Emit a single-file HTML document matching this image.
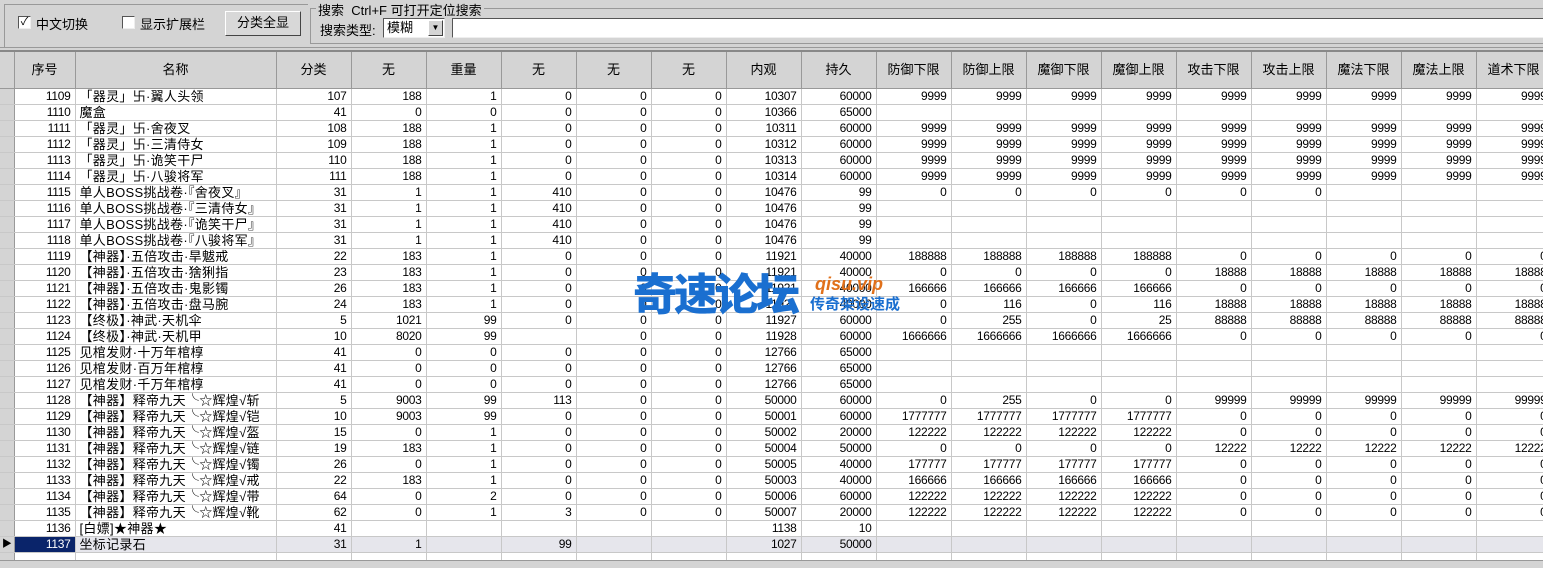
<!DOCTYPE html>
<html><head><meta charset="utf-8">
<style>
*{margin:0;padding:0;box-sizing:border-box}
body{width:1543px;height:568px;overflow:hidden;background:#d4d4d4;font:12px "Liberation Sans","Noto Sans CJK SC",sans-serif;color:#000;position:relative}
.abs{position:absolute}
.cb{position:absolute;width:13px;height:13px;background:#fff;border:1px solid #555;border-right-color:#eee;border-bottom-color:#eee;font-size:11px;line-height:11px;text-align:center}
.btn{position:absolute;left:225px;top:11px;width:76px;height:25px;background:#d8d8d8;border:1px solid;border-color:#fff #444 #444 #fff;text-align:center;line-height:22px;font-size:13px}
#grid{position:absolute;left:0;top:50px;width:1543px;height:510px;background:#fff;border-top:2px solid #888;overflow:hidden}
table{border-collapse:collapse;table-layout:fixed;position:absolute;left:0;top:0;width:1551px}
td,th{height:16px;line-height:15px;border-right:1px solid #c8c8c8;border-bottom:1px solid #c8c8c8;text-align:right;padding:0 4px 0 0;white-space:nowrap;overflow:hidden;letter-spacing:-0.3px;font-size:12px}
th{height:36px;background:#d4d4d4;font-weight:normal;text-align:center;padding:0;border-right:1px solid #999;border-bottom:1px solid #999;font-size:13px;letter-spacing:0}
td.n{text-align:left;padding-left:4px;letter-spacing:0.3px;font-size:13px}
td.i{background:#d4d4d4;border-right:1px solid #999;padding:0}
tr.sel td{background:#e6e6ec}
tr.sel td.id{background:#0a246a;color:#fff}
tr.sel td.i{background:#d4d4d4;text-align:center;font-size:10px}
</style></head><body>
<div class="abs" style="left:0;top:0;width:1543px;height:48px;border-bottom:1px solid #999"></div>
<div class="abs" style="left:4px;top:4px;width:304px;height:44px;border:1px solid #999;border-right:none"></div>
<div class="cb" style="left:18px;top:16px">✓</div>
<div class="abs" style="left:36px;top:14px;font-size:13px">中文切换</div>
<div class="cb" style="left:122px;top:16px"></div>
<div class="abs" style="left:140px;top:14px;font-size:13px">显示扩展栏</div>
<div class="btn">分类全显</div>
<div class="abs" style="left:310px;top:8px;width:1240px;height:36px;border:1px solid #999;border-right:none"></div>
<div class="abs" style="left:316px;top:0px;background:#d4d4d4;padding:0 2px;font-size:13px">搜索 &nbsp;Ctrl+F 可打开定位搜索</div>
<div class="abs" style="left:320px;top:20px;font-size:13px">搜索类型:</div>
<div class="abs" style="left:383px;top:18px;width:62px;height:20px;background:#fff;border:1px solid #555;border-right-color:#eee;border-bottom-color:#eee;font-size:13px;padding-left:3px;line-height:17px">模糊
<div class="abs" style="right:1px;top:1px;width:15px;height:16px;background:#d4d4d4;border:1px solid;border-color:#fff #444 #444 #fff;font-size:8px;text-align:center;line-height:14px">▼</div></div>
<div class="abs" style="left:452px;top:18px;width:1100px;height:20px;background:#fff;border:1px solid #555;border-right:none;border-bottom-color:#eee"></div>
<div id="grid">
<table>
<colgroup><col style="width:14px"><col style="width:61px"><col style="width:201px"><col style="width:75px"><col style="width:75px"><col style="width:75px"><col style="width:75px"><col style="width:75px"><col style="width:75px"><col style="width:75px"><col style="width:75px"><col style="width:75px"><col style="width:75px"><col style="width:75px"><col style="width:75px"><col style="width:75px"><col style="width:75px"><col style="width:75px"><col style="width:75px"><col style="width:75px"></colgroup>
<tr><th></th><th>序号</th><th>名称</th><th>分类</th><th>无</th><th>重量</th><th>无</th><th>无</th><th>无</th><th>内观</th><th>持久</th><th>防御下限</th><th>防御上限</th><th>魔御下限</th><th>魔御上限</th><th>攻击下限</th><th>攻击上限</th><th>魔法下限</th><th>魔法上限</th><th>道术下限</th></tr>
<tr><td class="i"></td><td>1109</td><td class="n">「器灵」卐·翼人头领</td><td>107</td><td>188</td><td>1</td><td>0</td><td>0</td><td>0</td><td>10307</td><td>60000</td><td>9999</td><td>9999</td><td>9999</td><td>9999</td><td>9999</td><td>9999</td><td>9999</td><td>9999</td><td>9999</td></tr>
<tr><td class="i"></td><td>1110</td><td class="n">魔盒</td><td>41</td><td>0</td><td>0</td><td>0</td><td>0</td><td>0</td><td>10366</td><td>65000</td><td></td><td></td><td></td><td></td><td></td><td></td><td></td><td></td><td></td></tr>
<tr><td class="i"></td><td>1111</td><td class="n">「器灵」卐·舍夜叉</td><td>108</td><td>188</td><td>1</td><td>0</td><td>0</td><td>0</td><td>10311</td><td>60000</td><td>9999</td><td>9999</td><td>9999</td><td>9999</td><td>9999</td><td>9999</td><td>9999</td><td>9999</td><td>9999</td></tr>
<tr><td class="i"></td><td>1112</td><td class="n">「器灵」卐·三清侍女</td><td>109</td><td>188</td><td>1</td><td>0</td><td>0</td><td>0</td><td>10312</td><td>60000</td><td>9999</td><td>9999</td><td>9999</td><td>9999</td><td>9999</td><td>9999</td><td>9999</td><td>9999</td><td>9999</td></tr>
<tr><td class="i"></td><td>1113</td><td class="n">「器灵」卐·诡笑干尸</td><td>110</td><td>188</td><td>1</td><td>0</td><td>0</td><td>0</td><td>10313</td><td>60000</td><td>9999</td><td>9999</td><td>9999</td><td>9999</td><td>9999</td><td>9999</td><td>9999</td><td>9999</td><td>9999</td></tr>
<tr><td class="i"></td><td>1114</td><td class="n">「器灵」卐·八骏将军</td><td>111</td><td>188</td><td>1</td><td>0</td><td>0</td><td>0</td><td>10314</td><td>60000</td><td>9999</td><td>9999</td><td>9999</td><td>9999</td><td>9999</td><td>9999</td><td>9999</td><td>9999</td><td>9999</td></tr>
<tr><td class="i"></td><td>1115</td><td class="n">单人BOSS挑战卷·『舍夜叉』</td><td>31</td><td>1</td><td>1</td><td>410</td><td>0</td><td>0</td><td>10476</td><td>99</td><td>0</td><td>0</td><td>0</td><td>0</td><td>0</td><td>0</td><td></td><td></td><td></td></tr>
<tr><td class="i"></td><td>1116</td><td class="n">单人BOSS挑战卷·『三清侍女』</td><td>31</td><td>1</td><td>1</td><td>410</td><td>0</td><td>0</td><td>10476</td><td>99</td><td></td><td></td><td></td><td></td><td></td><td></td><td></td><td></td><td></td></tr>
<tr><td class="i"></td><td>1117</td><td class="n">单人BOSS挑战卷·『诡笑干尸』</td><td>31</td><td>1</td><td>1</td><td>410</td><td>0</td><td>0</td><td>10476</td><td>99</td><td></td><td></td><td></td><td></td><td></td><td></td><td></td><td></td><td></td></tr>
<tr><td class="i"></td><td>1118</td><td class="n">单人BOSS挑战卷·『八骏将军』</td><td>31</td><td>1</td><td>1</td><td>410</td><td>0</td><td>0</td><td>10476</td><td>99</td><td></td><td></td><td></td><td></td><td></td><td></td><td></td><td></td><td></td></tr>
<tr><td class="i"></td><td>1119</td><td class="n">【神器】·五倍攻击·旱魃戒</td><td>22</td><td>183</td><td>1</td><td>0</td><td>0</td><td>0</td><td>11921</td><td>40000</td><td>188888</td><td>188888</td><td>188888</td><td>188888</td><td>0</td><td>0</td><td>0</td><td>0</td><td>0</td></tr>
<tr><td class="i"></td><td>1120</td><td class="n">【神器】·五倍攻击·猞猁指</td><td>23</td><td>183</td><td>1</td><td>0</td><td>0</td><td>0</td><td>11921</td><td>40000</td><td>0</td><td>0</td><td>0</td><td>0</td><td>18888</td><td>18888</td><td>18888</td><td>18888</td><td>18888</td></tr>
<tr><td class="i"></td><td>1121</td><td class="n">【神器】·五倍攻击·鬼影镯</td><td>26</td><td>183</td><td>1</td><td>0</td><td>0</td><td>0</td><td>11921</td><td>40000</td><td>166666</td><td>166666</td><td>166666</td><td>166666</td><td>0</td><td>0</td><td>0</td><td>0</td><td>0</td></tr>
<tr><td class="i"></td><td>1122</td><td class="n">【神器】·五倍攻击·盘马腕</td><td>24</td><td>183</td><td>1</td><td>0</td><td>0</td><td>0</td><td>11921</td><td>40000</td><td>0</td><td>116</td><td>0</td><td>116</td><td>18888</td><td>18888</td><td>18888</td><td>18888</td><td>18888</td></tr>
<tr><td class="i"></td><td>1123</td><td class="n">【终极】·神武·天机伞</td><td>5</td><td>1021</td><td>99</td><td>0</td><td>0</td><td>0</td><td>11927</td><td>60000</td><td>0</td><td>255</td><td>0</td><td>25</td><td>88888</td><td>88888</td><td>88888</td><td>88888</td><td>88888</td></tr>
<tr><td class="i"></td><td>1124</td><td class="n">【终极】·神武·天机甲</td><td>10</td><td>8020</td><td>99</td><td></td><td>0</td><td>0</td><td>11928</td><td>60000</td><td>1666666</td><td>1666666</td><td>1666666</td><td>1666666</td><td>0</td><td>0</td><td>0</td><td>0</td><td>0</td></tr>
<tr><td class="i"></td><td>1125</td><td class="n">见棺发财·十万年棺椁</td><td>41</td><td>0</td><td>0</td><td>0</td><td>0</td><td>0</td><td>12766</td><td>65000</td><td></td><td></td><td></td><td></td><td></td><td></td><td></td><td></td><td></td></tr>
<tr><td class="i"></td><td>1126</td><td class="n">见棺发财·百万年棺椁</td><td>41</td><td>0</td><td>0</td><td>0</td><td>0</td><td>0</td><td>12766</td><td>65000</td><td></td><td></td><td></td><td></td><td></td><td></td><td></td><td></td><td></td></tr>
<tr><td class="i"></td><td>1127</td><td class="n">见棺发财·千万年棺椁</td><td>41</td><td>0</td><td>0</td><td>0</td><td>0</td><td>0</td><td>12766</td><td>65000</td><td></td><td></td><td></td><td></td><td></td><td></td><td></td><td></td><td></td></tr>
<tr><td class="i"></td><td>1128</td><td class="n">【神器】释帝九天╰☆辉煌√斩</td><td>5</td><td>9003</td><td>99</td><td>113</td><td>0</td><td>0</td><td>50000</td><td>60000</td><td>0</td><td>255</td><td>0</td><td>0</td><td>99999</td><td>99999</td><td>99999</td><td>99999</td><td>99999</td></tr>
<tr><td class="i"></td><td>1129</td><td class="n">【神器】释帝九天╰☆辉煌√铠</td><td>10</td><td>9003</td><td>99</td><td>0</td><td>0</td><td>0</td><td>50001</td><td>60000</td><td>1777777</td><td>1777777</td><td>1777777</td><td>1777777</td><td>0</td><td>0</td><td>0</td><td>0</td><td>0</td></tr>
<tr><td class="i"></td><td>1130</td><td class="n">【神器】释帝九天╰☆辉煌√盔</td><td>15</td><td>0</td><td>1</td><td>0</td><td>0</td><td>0</td><td>50002</td><td>20000</td><td>122222</td><td>122222</td><td>122222</td><td>122222</td><td>0</td><td>0</td><td>0</td><td>0</td><td>0</td></tr>
<tr><td class="i"></td><td>1131</td><td class="n">【神器】释帝九天╰☆辉煌√链</td><td>19</td><td>183</td><td>1</td><td>0</td><td>0</td><td>0</td><td>50004</td><td>50000</td><td>0</td><td>0</td><td>0</td><td>0</td><td>12222</td><td>12222</td><td>12222</td><td>12222</td><td>12222</td></tr>
<tr><td class="i"></td><td>1132</td><td class="n">【神器】释帝九天╰☆辉煌√镯</td><td>26</td><td>0</td><td>1</td><td>0</td><td>0</td><td>0</td><td>50005</td><td>40000</td><td>177777</td><td>177777</td><td>177777</td><td>177777</td><td>0</td><td>0</td><td>0</td><td>0</td><td>0</td></tr>
<tr><td class="i"></td><td>1133</td><td class="n">【神器】释帝九天╰☆辉煌√戒</td><td>22</td><td>183</td><td>1</td><td>0</td><td>0</td><td>0</td><td>50003</td><td>40000</td><td>166666</td><td>166666</td><td>166666</td><td>166666</td><td>0</td><td>0</td><td>0</td><td>0</td><td>0</td></tr>
<tr><td class="i"></td><td>1134</td><td class="n">【神器】释帝九天╰☆辉煌√带</td><td>64</td><td>0</td><td>2</td><td>0</td><td>0</td><td>0</td><td>50006</td><td>60000</td><td>122222</td><td>122222</td><td>122222</td><td>122222</td><td>0</td><td>0</td><td>0</td><td>0</td><td>0</td></tr>
<tr><td class="i"></td><td>1135</td><td class="n">【神器】释帝九天╰☆辉煌√靴</td><td>62</td><td>0</td><td>1</td><td>3</td><td>0</td><td>0</td><td>50007</td><td>20000</td><td>122222</td><td>122222</td><td>122222</td><td>122222</td><td>0</td><td>0</td><td>0</td><td>0</td><td>0</td></tr>
<tr><td class="i"></td><td>1136</td><td class="n">[白嫖]★神器★</td><td>41</td><td></td><td></td><td></td><td></td><td></td><td>1138</td><td>10</td><td></td><td></td><td></td><td></td><td></td><td></td><td></td><td></td><td></td></tr>
<tr class="sel"><td class="i">▶</td><td class="id">1137</td><td class="n">坐标记录石</td><td>31</td><td>1</td><td></td><td>99</td><td></td><td></td><td>1027</td><td>50000</td><td></td><td></td><td></td><td></td><td></td><td></td><td></td><td></td><td></td></tr>
<tr><td class="i"></td><td></td><td></td><td></td><td></td><td></td><td></td><td></td><td></td><td></td><td></td><td></td><td></td><td></td><td></td><td></td><td></td><td></td><td></td><td></td></tr>
</table>
</div>
<div class="abs" style="left:0;top:560px;width:1543px;height:8px;background:#d4d4d4;border-top:1px solid #999"></div>
<div class="abs" style="left:633px;top:262px;font:900 44px 'Noto Sans CJK SC',sans-serif;color:#1a6fd0;letter-spacing:-3px;line-height:58px">奇速论坛</div>
<div class="abs" style="left:815px;top:274px;font:italic bold 18px 'Liberation Sans',sans-serif;color:#e0701a;line-height:20px">qisu.vip</div>
<div class="abs" style="left:810px;top:295px;font:bold 15px 'Noto Sans CJK SC',sans-serif;color:#1a6fd0;line-height:18px">传奇架设速成</div>
</body></html>
